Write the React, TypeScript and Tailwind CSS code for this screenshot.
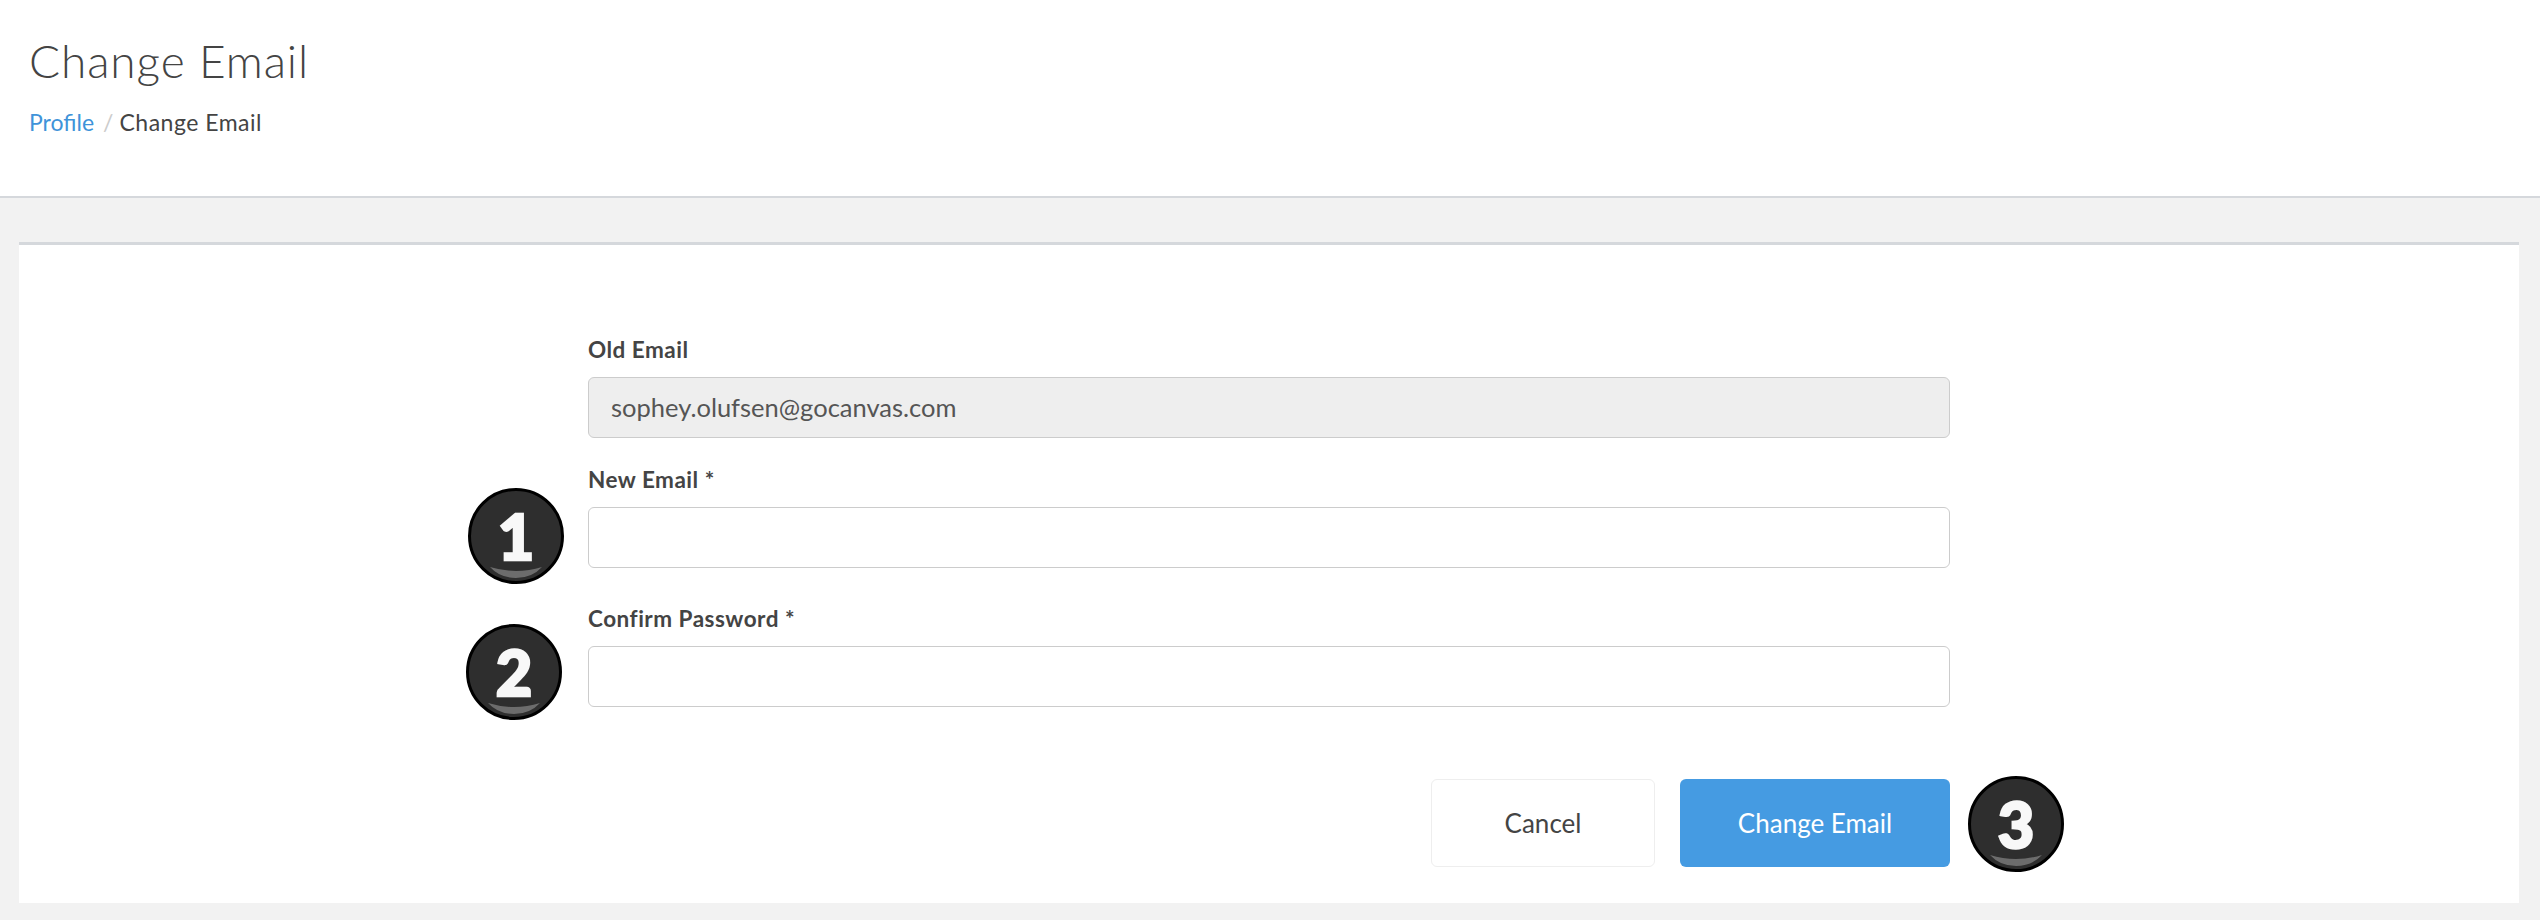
export default function App() {
  const Badge = ({ n, cls }: { n: string; cls: string }) => (
    <div className={`absolute w-[96px] h-[96px] rounded-full bg-[#2e2e2e] border-[3px] border-black flex items-center justify-center overflow-hidden ${cls}`}>
      <span className="text-[#f8f8f8] text-[63px] leading-none font-black relative top-[-1px] [-webkit-text-stroke:2.5px_#f8f8f8] font-['Lato',sans-serif]">{n}</span>
      <svg className="absolute left-0 top-0" width="90" height="90" viewBox="0 0 90 90">
        <path d="M19 76 Q45 84 71 76 Q61 87 45 87 Q29 87 19 76 Z" fill="#6c6c6c" />
      </svg>
    </div>
  );
  const input = "block w-full h-[61px] rounded-[6px] border border-[#cccccc] bg-white";
  const label = "block h-[30px] leading-[30px] mb-[12px] text-[22.5px] tracking-[0.5px] font-bold text-[#444444]";
  return (
    <div className="min-h-screen bg-[#f2f2f2] font-['Lato',sans-serif]">
      <header className="h-[198px] bg-white border-b-2 border-[#d5d8dc] pl-[29px] pt-[31px]">
        <h1 className="text-[46px] leading-[60px] font-light tracking-[0.9px] text-[#444444]">Change Email</h1>
        <nav className="mt-[16px] flex items-center text-[23px] leading-[30px]">
          <a className="text-[#3f93d9]">Profile</a>
          <span className="ml-[9px] mr-[6px] text-[#cccccc]">/</span>
          <span className="text-[#444444] tracking-[0.5px]">Change Email</span>
        </nav>
      </header>
      <main className="pl-[19px] pr-[21px] pt-[44px] pb-[17px]">
        <section className="bg-white border-t-[3px] border-[#d5d8dc] h-[661px] pt-[90px]">
          <form className="relative mx-auto w-[1362px]">
            <div className="mb-[27px]">
              <label className={label}>Old Email</label>
              <div className="h-[61px] rounded-[6px] border border-[#cccccc] bg-[#eeeeee] pl-[22px] flex items-center text-[25.5px] text-[#555555]">sophey.olufsen@gocanvas.com</div>
            </div>
            <div className="relative mb-[36px]">
              <label className={label}>New Email *</label>
              <input className={input} />
              <Badge n="1" cls="left-[-120px] top-[23px]" />
            </div>
            <div className="relative">
              <label className={label}>Confirm Password *</label>
              <input className={input} />
              <Badge n="2" cls="left-[-122px] top-[20px]" />
            </div>
            <div className="relative mt-[72px] flex justify-end gap-[25px]">
              <button type="button" className="w-[224px] h-[88px] rounded-[6px] border border-[#eeeeee] bg-white text-[26px] text-[#444444]">Cancel</button>
              <button type="button" className="w-[270px] h-[88px] rounded-[6px] bg-[#459be2] text-[26px] text-white">Change Email</button>
              <Badge n="3" cls="right-[-114px] top-[-3px]" />
            </div>
          </form>
        </section>
      </main>
    </div>
  );
}
